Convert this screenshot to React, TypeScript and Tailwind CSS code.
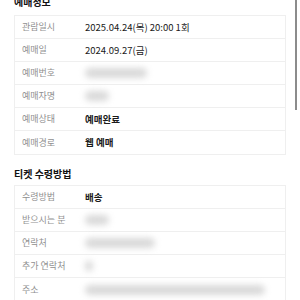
import React from "react";

type Row = { label: string; value?: string; bold?: boolean; blur?: number };

const t1: Row[] = [
  { label: "관람일시", value: "2025.04.24(목) 20:00 1회" },
  { label: "예매일", value: "2024.09.27(금)" },
  { label: "예매번호", blur: 62 },
  { label: "예매자명", blur: 24 },
  { label: "예매상태", value: "예매완료", bold: true },
  { label: "예매경로", value: "웹 예매", bold: true },
];

const t2: Row[] = [
  { label: "수령방법", value: "배송", bold: true },
  { label: "받으시는 분", blur: 24 },
  { label: "연락처", blur: 70 },
  { label: "추가 연락처", blur: 8 },
  { label: "주소", blur: 180 },
];

function Table({ rows }: { rows: Row[] }) {
  return (
    <div className="w-[272px] border border-[#efefef] bg-white">
      {rows.map((r, i) => (
        <div
          key={r.label}
          className={
            "flex h-[23px] items-center" +
            (i < rows.length - 1 ? " border-b border-[#efefef]" : "")
          }
        >
          <div className="w-[70px] shrink-0 pl-[7px] text-[9px] text-[#8f8f8f]">{r.label}</div>
          <div className="flex-1 text-[9.5px] text-[#1a1a1a]">
            {r.value ? (
              <span className={r.bold ? "font-bold" : ""}>{r.value}</span>
            ) : (
              <div
                className="h-[10px] rounded-full bg-[#d9d9d9] blur-[3px]"
                style={{ width: r.blur }}
              />
            )}
          </div>
        </div>
      ))}
    </div>
  );
}

export default function App() {
  return (
    <div
      className="relative h-[300px] w-[300px] overflow-hidden bg-white"
      style={{ fontFamily: '"Noto Sans CJK KR", "Noto Sans", sans-serif' }}
    >
      <div className="pl-[14px]">
        <div className="-mt-[5px] h-[14px] text-[10px] font-bold leading-[14px] text-[#111]">예매정보</div>
        <div className="mt-[6px]">
          <Table rows={t1} />
        </div>
        <div className="mt-[12px] h-[14px] text-[10px] font-bold leading-[14px] text-[#111]">티켓 수령방법</div>
        <div className="mt-[4px]">
          <Table rows={t2} />
        </div>
      </div>
      <div className="absolute right-[3px] top-0 h-[110px] w-[2px] bg-[#8c8c8c]" />
    </div>
  );
}
